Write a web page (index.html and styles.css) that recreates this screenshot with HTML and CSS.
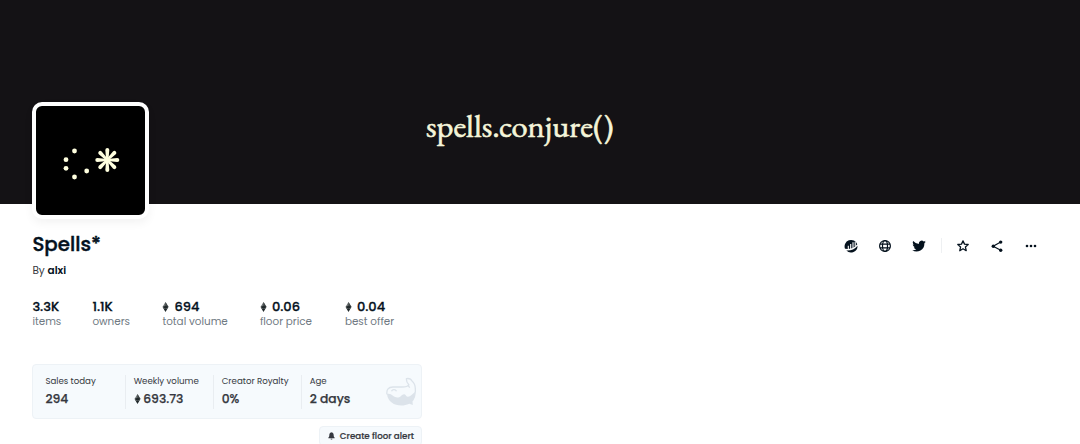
FILE: index.html
```html
<!DOCTYPE html>
<html lang="en">
<head>
<meta charset="utf-8">
<title>Spells*</title>
<link rel="stylesheet" href="styles.css">
</head>
<body>
<svg width="0" height="0" class="defs">
  <symbol id="eth" viewBox="0 0 7 10"><path fill="#6b7071" d="M3.5 0 .5 5l3 1.700L6.500 5z"/><path fill="#3c4243" d="M3.500 0v6.600L6.500 5z"/><path fill="#20282a" d="M3.500 3.700.5 5l3 1.700L6.500 5zM.8 5.500l2.700 4.400 2.700-4.400-2.700 1.500z"/></symbol>
</svg>
<header class="banner"><span class="banner-text">spells.conjure()</span></header>
<main class="page">
  <div class="avatar">
    <svg viewBox="0 0 109 109" width="109" height="109" fill="#ffffdf">
      <circle cx="38.500" cy="45" r="2.400"/><circle cx="30" cy="53.700" r="2.400"/><circle cx="30" cy="62.300" r="2.400"/><circle cx="38.500" cy="71" r="2.400"/><circle cx="50.700" cy="65" r="2.400"/>
      <g transform="translate(71.300 54)">
        <path id="ray" d="M-1.100 0-2-10Q-1.900-12 0-12T2-10L1.100 0z"/>
        <use href="#ray" transform="rotate(45)"/><use href="#ray" transform="rotate(90)"/><use href="#ray" transform="rotate(135)"/><use href="#ray" transform="rotate(180)"/><use href="#ray" transform="rotate(225)"/><use href="#ray" transform="rotate(270)"/><use href="#ray" transform="rotate(315)"/>
      </g>
    </svg>
  </div>
  <div class="heading">
    <h1 class="title">Spells*</h1>
    <nav class="actions">
      <svg class="icon" viewBox="0 0 14 14"><path fill="#04111d" d="M1 9.800A6.500 6.500 0 1 1 13.300 5.200C10 9.300 6 10.200 1 9.800z"/><path d="M4.300 6.800v4M6.700 5v5.300M9 3.200v5.900M11.200 2.800v4.800" stroke="#fff" stroke-width="1.100"/><path fill="#04111d" d="M13.500 6.700A6.500 6.500 0 0 1 2.300 11.500C7 11.800 10.500 10.300 13.500 6.700z"/></svg>
      <svg class="icon" viewBox="0 0 14 14" fill="none" stroke="#04111d" stroke-width="1.200"><circle cx="7" cy="7" r="5.400"/><ellipse cx="7" cy="7" rx="2.500" ry="5.400"/><path d="M1.900 5.200h10.200M1.900 8.800h10.200"/></svg>
      <svg class="icon" viewBox="0 0 24 24" fill="#04111d"><path d="M23.600 4.900a9 9 0 0 1-2.700.8 4.700 4.700 0 0 0 2.100-2.700 9.600 9.600 0 0 1-3 1.200A4.750 4.750 0 0 0 11.900 8.500 13.500 13.500 0 0 1 2.100 3.500a4.750 4.750 0 0 0 1.500 6.300 4.700 4.700 0 0 1-2.200-.6c0 2.400 1.600 4.300 3.800 4.800a4.800 4.800 0 0 1-2.100.1 4.750 4.750 0 0 0 4.400 3.300A9.600 9.600 0 0 1 .4 19.300 13.500 13.500 0 0 0 21.200 7.300a9.500 9.500 0 0 0 2.400-2.400z"/></svg>
      <span class="rule"></span>
      <svg class="icon" viewBox="0 0 14 14" fill="none" stroke="#04111d" stroke-width="1.300" stroke-linejoin="round"><path d="m7 1.900 1.500 3.200 3.700.4-2.800 2.400.8 3.800L7 9.800l-3.200 1.900.8-3.800-2.800-2.400 3.700-.4z"/></svg>
      <svg class="icon" viewBox="0 0 14 14" fill="#04111d"><path d="M10.700 3 3.200 7.200l7.500 4.100" fill="none" stroke="#04111d" stroke-width="1.200"/><circle cx="10.700" cy="3.100" r="1.700"/><circle cx="3.300" cy="7.200" r="1.700"/><circle cx="10.700" cy="11.200" r="1.700"/></svg>
      <svg class="icon" viewBox="0 0 14 14" fill="#04111d"><circle cx="3" cy="7" r="1.300"/><circle cx="7" cy="7" r="1.300"/><circle cx="11" cy="7" r="1.300"/></svg>
    </nav>
  </div>
  <p class="author">By <b>alxi</b></p>
  <section class="stats">
    <div><strong>3.3K</strong><span>items</span></div>
    <div><strong>1.1K</strong><span>owners</span></div>
    <div><strong><svg class="eth"><use href="#eth"/></svg>694</strong><span>total volume</span></div>
    <div><strong><svg class="eth"><use href="#eth"/></svg>0.06</strong><span>floor price</span></div>
    <div><strong><svg class="eth"><use href="#eth"/></svg>0.04</strong><span>best offer</span></div>
  </section>
  <div class="insights">
    <section class="panel">
      <div class="cell"><span>Sales today</span><strong>294</strong></div>
      <div class="cell"><span>Weekly volume</span><strong><svg class="eth"><use href="#eth"/></svg>693.73</strong></div>
      <div class="cell"><span>Creator Royalty</span><strong>0%</strong></div>
      <div class="cell"><span>Age</span><strong>2 days</strong></div>
      <svg class="whale" viewBox="0 0 30 30"><path fill="#dce3ea" d="M1 17c2.500-.6 4 .2 6 1.800 2.500 2 5.500 2.500 8 .2 1.500-1.400 2.500-2.300 4-1.500 1.300.8 1.200 2.300 3 2.300 2.500 0 4.500-3 7-4.800-.1 4-.9 7-2.500 9l.3 4-3.500-1.200C14 31 2 27.500 1 17z"/><path fill="none" stroke="#dce3ea" stroke-width="1.300" d="M1 17.500C.2 12.500 2.500 10 7 10h9c3.500 0 6-.5 6.800-2.300C21.500 6 20 4.500 20.500 1.600c2.500-.4 4.600.4 5.500 2.400C28.600 6 29.400 9 29.400 13c0 4-1 8-3 11M22.800 7.700c-.6 1.200 0 2.300 1.200 2.800"/><path fill="none" stroke="#dce3ea" stroke-width="1.300" d="M5.500 14.300c.9-2.300 4-2.300 5 0"/></svg>
    </section>
    <button class="alert"><svg class="bell" viewBox="0 0 8 9" fill="#353840"><path d="M3.500.6a.5.500 0 0 1 1 0C6 .9 6.500 2 6.500 3.500c0 1.500.4 2.200 1.100 2.800V7H.4v-.7c.7-.6 1.100-1.300 1.100-2.800C1.500 2 2 .9 3.500.6zM3 7.500h2a1 1 0 0 1-2 0z"/></svg>Create floor alert</button>
  </div>
</main>
</body>
</html>
```
FILE: styles.css
```css
* { box-sizing: border-box; }
body { margin: 0; height: 444px; overflow: hidden; background: #fff; color: #04111d; font-family: Poppins, Inter, sans-serif; }
.defs { display: block; }
.banner { height: 204px; background: #141215; padding: 107px 0 0 426px; }
.banner-text { display: inline-block; color: #f5f5d9; font: 400 31px/38px "EB Garamond", "Liberation Serif", serif; -webkit-text-stroke: .6px #f5f5d9; transform: scaleX(1.05); transform-origin: left; }
.page { padding: 0 32.4px; }
.avatar { position: relative; width: 117px; height: 117px; margin-top: -102px; border: 4px solid #fff; border-radius: 10px; background: #000; box-shadow: 0 4px 10px rgba(0,0,0,.05); overflow: hidden; }
.avatar svg { display: block; }
.heading { display: flex; justify-content: space-between; margin-top: 12px; height: 28px; }
.title { margin: 0; font-size: 19.8px; line-height: 26px; font-weight: 500; -webkit-text-stroke: .4px; }
.actions { display: flex; align-items: center; gap: 20px; padding: 1px 9.6px 0 0; }
.icon { width: 14px; height: 14px; }
.rule { width: 1px; height: 15px; background: #eef0f2; margin: 0 -5.5px; }
.author { margin: 4px 0 0; font-size: 10.5px; line-height: 16px; color: #353840; }
.author b { font-weight: 600; color: #04111d; }
.stats { display: grid; grid-template-columns: 60px 70px 97.5px 85px auto; margin-top: 20px; height: 30px; }
.stats strong { display: flex; align-items: center; font-size: 13px; line-height: 15px; font-weight: 500; -webkit-text-stroke: .3px; }
.stats span { display: block; font-size: 10.4px; line-height: 15px; color: #707a83; white-space: nowrap; }
.eth { width: 7px; height: 10px; margin-right: 5px; }
.insights { width: 390px; display: flex; flex-direction: column; align-items: flex-end; margin-top: 35px; }
.panel { width: 390px; height: 55px; display: flex; align-items: center; padding-left: 4px; border: 1px solid #edf2f6; border-radius: 4px; background: #f6fafd; color: #353840; }
.cell { width: 88px; height: 34px; padding-left: 8px; border-right: 1px solid #e9edf1; white-space: nowrap; }
.cell:first-child { width: 88.3px; }
.cell:nth-child(4) { width: 82px; border: 0; }
.cell span { display: block; font-size: 8.65px; line-height: 13px; }
.cell strong { display: flex; align-items: center; font-size: 12.3px; line-height: 16px; margin-top: 3px; font-weight: 500; -webkit-text-stroke: .25px; }
.cell .eth { margin-right: 2.5px; }
.whale { width: 30px; height: 30px; margin-left: 2.5px; }
.alert { width: 103px; height: 20px; margin-top: 7px; display: flex; align-items: center; justify-content: center; gap: 5px; padding: 0; border: 1px solid #edf2f6; border-radius: 4px; background: #f6fafd; color: #353840; font: 500 8.7px/14px Poppins, Inter, sans-serif; -webkit-text-stroke: .2px; white-space: nowrap; }
.bell { width: 7px; height: 8px; flex: none; }
```
